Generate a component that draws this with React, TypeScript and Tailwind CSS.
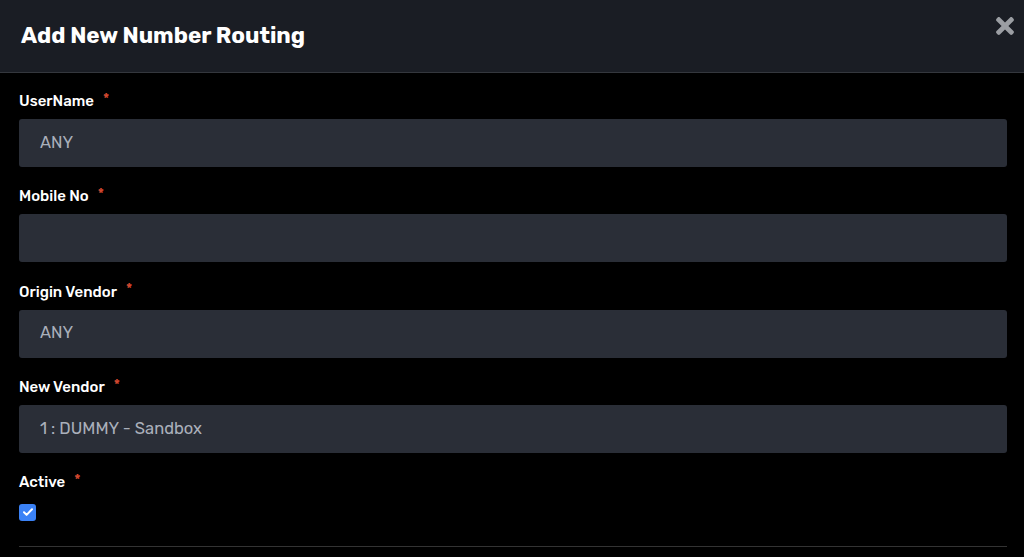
import { FaTimes } from "react-icons/fa";

const fields = [
	{ label: "UserName", value: "ANY" },
	{ label: "Mobile No", value: "" },
	{ label: "Origin Vendor", value: "ANY" },
	{ label: "New Vendor", value: "1 : DUMMY - Sandbox" },
];

function Label({ text }: { text: string }) {
	return (
		<label className="flex items-center h-[20px] text-[15px] font-medium text-white">
			{text}
			<span className="ml-[9px] -mt-[4px] text-[#d2472f] text-[14px]">*</span>
		</label>
	);
}

export default function App() {
	return (
		<div
			className="w-[1024px] h-[557px] bg-black overflow-hidden"
			style={{ fontFamily: "Rubik, Inter, 'Noto Sans', sans-serif" }}
		>
			{/* Header */}
			<div className="h-[73px] bg-[#1a1d24] border-b border-[#34373d] flex items-center justify-between pl-[21px] pr-[6px]">
				<h2 className="text-[22.5px] font-bold text-white">Add New Number Routing</h2>
				<div className="self-start mt-[13px] text-[#9b9ea3]">
					<FaTimes size={26} />
				</div>
			</div>

			{/* Body */}
			<div className="px-[19px] pt-[18px] pr-[17px]">
				{fields.map((f) => (
					<div key={f.label} className="mb-[19.4px]">
						<Label text={f.label} />
						<div className="mt-[8px] h-[48px] rounded-[3px] bg-[#2a2e37] flex items-center px-[21px] text-[16.5px] text-[#aab0bb]">
							{f.value}
						</div>
					</div>
				))}

				<Label text="Active" />
				<div className="mt-[11px] w-[17px] h-[17px] rounded-[3px] bg-[#3b82f6] flex items-center justify-center">
					<svg width="12" height="12" viewBox="0 0 12 12" fill="none">
						<path d="M2 6.3l2.6 2.6L10 3.3" stroke="white" strokeWidth="2" strokeLinecap="round" strokeLinejoin="round" />
					</svg>
				</div>

				<div className="mt-[25px] h-px bg-[#333]" />
			</div>
		</div>
	);
}
